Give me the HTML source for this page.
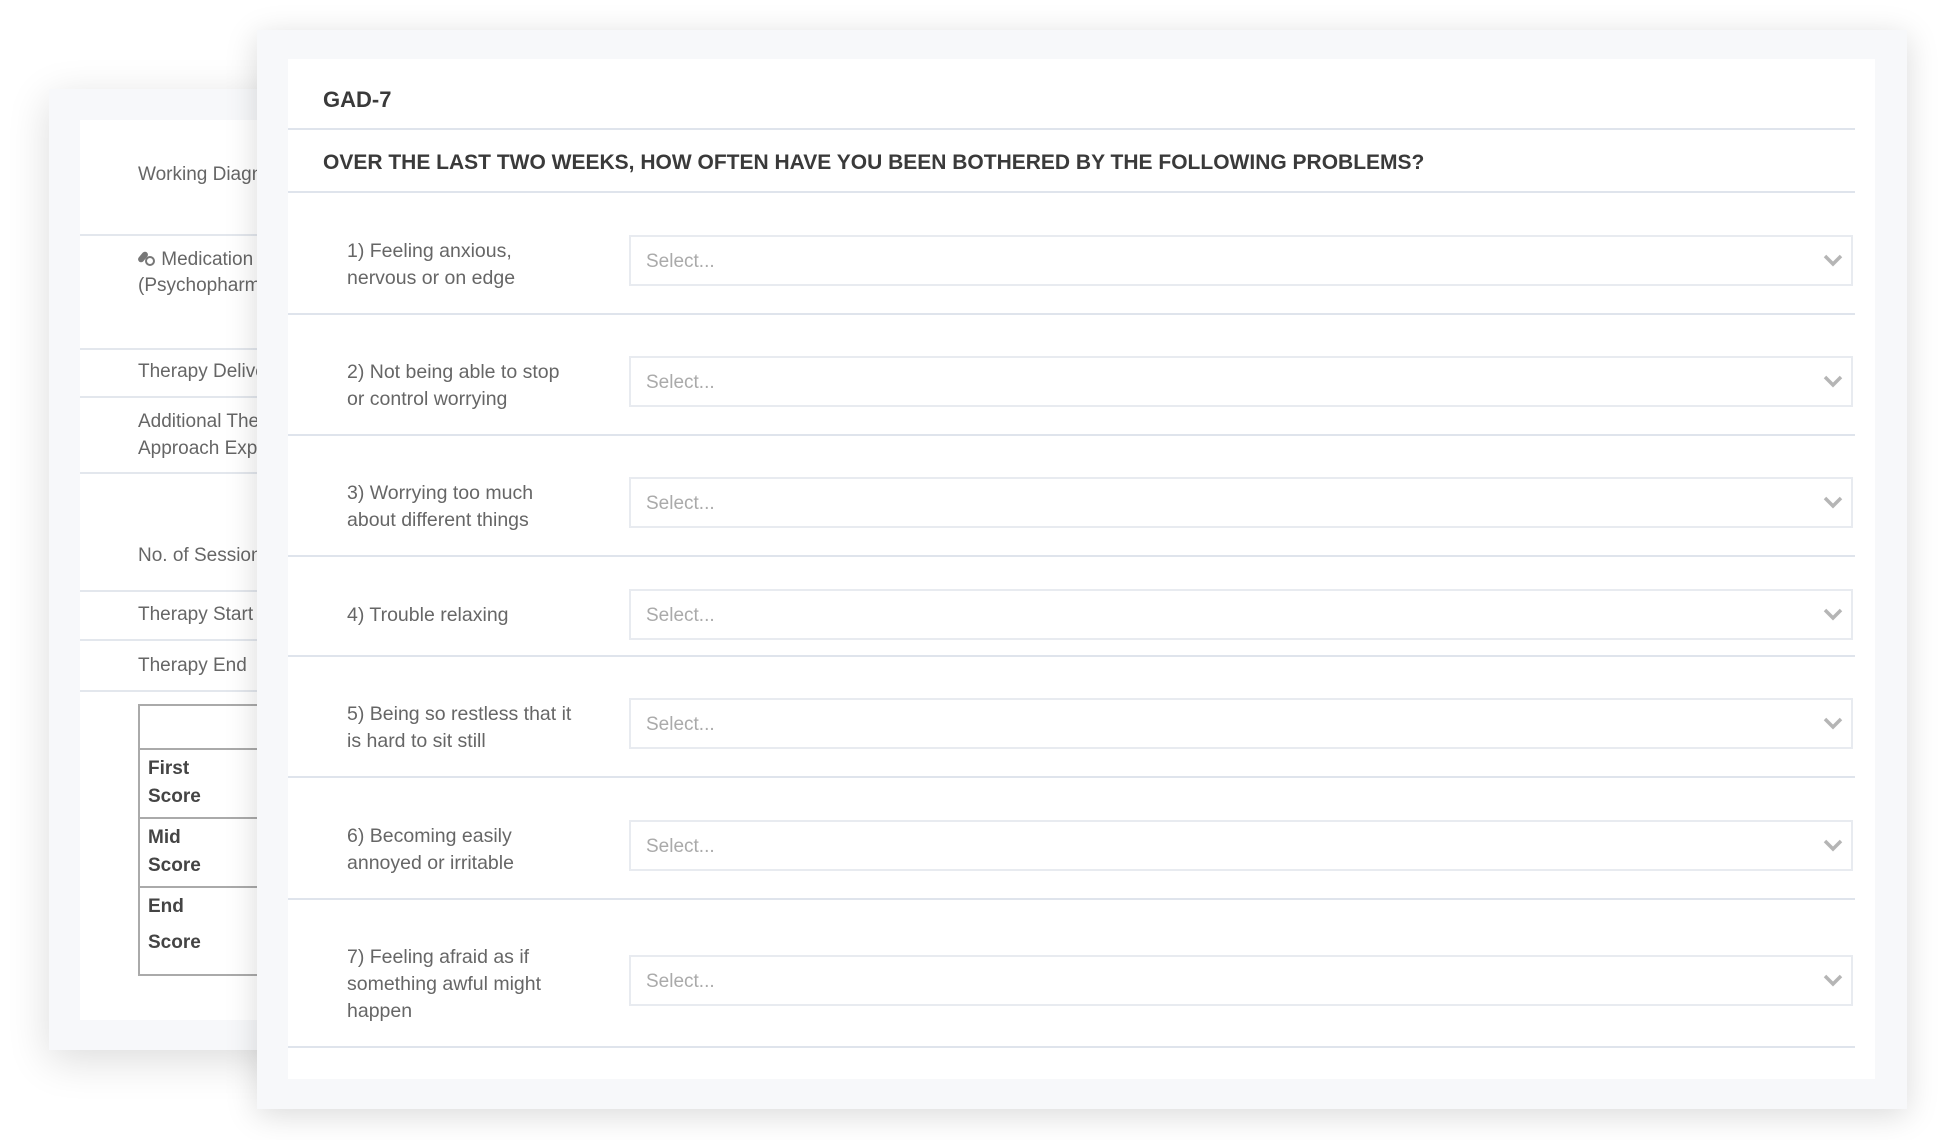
<!DOCTYPE html>
<html><head><meta charset="utf-8"><style>
*{margin:0;padding:0;box-sizing:border-box}
body{width:1938px;height:1140px;background:#fff;position:relative;overflow:hidden;font-family:"Liberation Sans",sans-serif;color:#555}
.abs{position:absolute}
#back{left:49px;top:89px;width:400px;height:961px;background:#f7f8fa;box-shadow:0 10px 40px rgba(0,0,0,.14)}
#backin{left:80px;top:120px;width:300px;height:900px;background:#fff}
.bt{position:absolute;left:138px;font-size:19px;color:#666;white-space:nowrap;line-height:27px}
.bl{position:absolute;left:80px;width:200px;height:2px;background:#e3e7ed}
#tbl{left:138px;top:704px;width:160px;height:272px;border:2px solid #aaa;border-right:none}
.tl{position:absolute;left:138px;width:160px;height:2px;background:#aaa}
.tt{position:absolute;left:148px;font-size:19px;font-weight:bold;color:#444;line-height:28px}
#front{left:257px;top:30px;width:1650px;height:1079px;background:#f7f8fa;box-shadow:0 6px 30px rgba(0,0,0,.15)}
#frontin{left:288px;top:59px;width:1587px;height:1020px;background:#fff}
.fl{position:absolute;left:288px;width:1567px;height:2px;background:#dfe4ec}
.h{position:absolute;left:323px;font-weight:bold;color:#3a3a3a;white-space:nowrap}
.lab{position:absolute;left:347px;font-size:19.5px;color:#666;line-height:27px;white-space:nowrap;margin-top:1px}
.sel{position:absolute;left:629px;width:1224px;height:51px;border:2.5px solid #e8ebf0;background:#fff}
.sel span{position:absolute;left:15px;top:2px;line-height:46px;font-size:19px;color:#aaa}
.sel svg{position:absolute;right:7px;top:15px}
</style></head><body>
<div id="back" class="abs"></div>
<div id="backin" class="abs"></div>
<div class="bt" style="top:161px">Working Diagnosis</div>
<div class="bl" style="top:234px"></div>
<div class="bt" style="top:246px"><svg width="18" height="16" viewBox="0 0 18 16" style="vertical-align:-1px"><rect x="2" y="1" width="6" height="12" rx="3" transform="rotate(40 5 7)" fill="#777"/><circle cx="12" cy="11" r="4" fill="none" stroke="#777" stroke-width="2"/></svg> Medication</div>
<div class="bt" style="top:272px">(Psychopharmacology)</div>
<div class="bl" style="top:348px"></div>
<div class="bt" style="top:358px">Therapy Delivery</div>
<div class="bl" style="top:396px"></div>
<div class="bt" style="top:408px">Additional Therapy</div>
<div class="bt" style="top:435px">Approach Explained</div>
<div class="bl" style="top:472px"></div>
<div class="bt" style="top:542px">No. of Sessions</div>
<div class="bl" style="top:590px"></div>
<div class="bt" style="top:601px">Therapy Start</div>
<div class="bl" style="top:639px"></div>
<div class="bt" style="top:652px">Therapy End</div>
<div class="bl" style="top:690px"></div>
<div id="tbl" class="abs"></div>
<div class="tl" style="top:748px"></div>
<div class="tl" style="top:817px"></div>
<div class="tl" style="top:886px"></div>
<div class="tt" style="top:755px">First<br>Score</div>
<div class="tt" style="top:824px">Mid<br>Score</div>
<div class="tt" style="top:893px">End</div>
<div class="tt" style="top:929px">Score</div>

<div id="front" class="abs"></div>
<div id="frontin" class="abs"></div>
<div class="h" style="top:87px;font-size:22px">GAD-7</div>
<div class="fl" style="top:128px"></div>
<div class="h" style="top:151px;font-size:21px">OVER THE LAST TWO WEEKS, HOW OFTEN HAVE YOU BEEN BOTHERED BY THE FOLLOWING PROBLEMS?</div>
<div class="fl" style="top:191px"></div>

<div class="lab" style="top:237px">1) Feeling anxious,<br>nervous or on edge</div>
<div class="sel" style="top:235px"><span>Select...</span><svg width="22" height="16" viewBox="0 0 22 16"><path d="M3 4l8 8 8-8" fill="none" stroke="#b5b5b5" stroke-width="3.5"/></svg></div>
<div class="fl" style="top:313px"></div>

<div class="lab" style="top:358px">2) Not being able to stop<br>or control worrying</div>
<div class="sel" style="top:356px"><span>Select...</span><svg width="22" height="16" viewBox="0 0 22 16"><path d="M3 4l8 8 8-8" fill="none" stroke="#b5b5b5" stroke-width="3.5"/></svg></div>
<div class="fl" style="top:434px"></div>

<div class="lab" style="top:479px">3) Worrying too much<br>about different things</div>
<div class="sel" style="top:477px"><span>Select...</span><svg width="22" height="16" viewBox="0 0 22 16"><path d="M3 4l8 8 8-8" fill="none" stroke="#b5b5b5" stroke-width="3.5"/></svg></div>
<div class="fl" style="top:555px"></div>

<div class="lab" style="top:601px">4) Trouble relaxing</div>
<div class="sel" style="top:589px"><span>Select...</span><svg width="22" height="16" viewBox="0 0 22 16"><path d="M3 4l8 8 8-8" fill="none" stroke="#b5b5b5" stroke-width="3.5"/></svg></div>
<div class="fl" style="top:655px"></div>

<div class="lab" style="top:700px">5) Being so restless that it<br>is hard to sit still</div>
<div class="sel" style="top:698px"><span>Select...</span><svg width="22" height="16" viewBox="0 0 22 16"><path d="M3 4l8 8 8-8" fill="none" stroke="#b5b5b5" stroke-width="3.5"/></svg></div>
<div class="fl" style="top:776px"></div>

<div class="lab" style="top:822px">6) Becoming easily<br>annoyed or irritable</div>
<div class="sel" style="top:820px"><span>Select...</span><svg width="22" height="16" viewBox="0 0 22 16"><path d="M3 4l8 8 8-8" fill="none" stroke="#b5b5b5" stroke-width="3.5"/></svg></div>
<div class="fl" style="top:898px"></div>

<div class="lab" style="top:943px">7) Feeling afraid as if<br>something awful might<br>happen</div>
<div class="sel" style="top:955px"><span>Select...</span><svg width="22" height="16" viewBox="0 0 22 16"><path d="M3 4l8 8 8-8" fill="none" stroke="#b5b5b5" stroke-width="3.5"/></svg></div>
<div class="fl" style="top:1046px"></div>
</body></html>
